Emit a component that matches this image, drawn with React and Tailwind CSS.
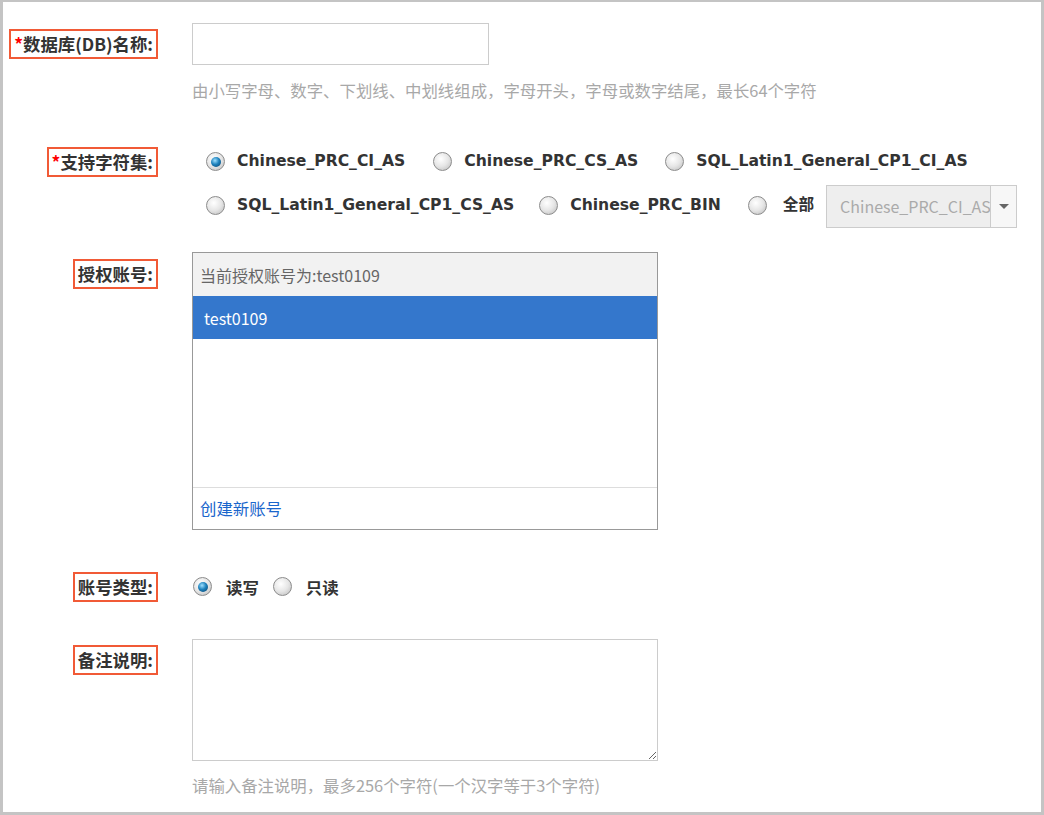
import { useState } from "react";

const cjk = "font-['Noto_Sans_CJK_SC',sans-serif]";
const opt = "font-['DejaVu_Sans','Noto_Sans_CJK_SC',sans-serif]";

function Label({ text, required }) {
  return (
    <div className="w-[155px] flex justify-end shrink-0">
      <div
        className={`border-2 border-[#f15a36] px-[3px] py-[2px] leading-[22px] text-[17.4px] font-bold text-[#333] whitespace-nowrap ${cjk}`}
      >
        {required && <span className="text-[#ff0000]">*</span>}
        {text}
      </div>
    </div>
  );
}

function Radio({ checked }) {
  return (
    <span className="w-[19px] h-[19px] rounded-full border border-[#8c8c8c] bg-[radial-gradient(circle_at_40%_35%,#ffffff,#e6e6e6_50%,#b8b8b8)] flex items-center justify-center shrink-0">
      {checked && (
        <span className="w-[10px] h-[10px] rounded-full bg-[radial-gradient(circle_at_40%_35%,#9fe0ff,#1e82bd_45%,#083d66)]" />
      )}
    </span>
  );
}

function Option({ label, checked, onClick, className = "", gap = "ml-[12px]" }) {
  return (
    <div className={`flex items-center cursor-pointer ${className}`} onClick={onClick}>
      <Radio checked={checked} />
      <span className={`${gap} text-[15.6px] font-bold text-[#333] ${opt}`}>{label}</span>
    </div>
  );
}

export default function App() {
  const [charset, setCharset] = useState("Chinese_PRC_CI_AS");
  const [mode, setMode] = useState("rw");

  return (
    <div className="w-[1044px] h-[815px] bg-white border-t-2 border-l-[3px] border-r-[3px] border-b-[3px] border-[#c4c4c4] pt-[21px]">
      {/* 数据库名称 */}
      <div className="flex items-center">
        <Label text="数据库(DB)名称:" required />
        <input className="ml-[34px] w-[297px] h-[42px] border border-[#cccccc] outline-none px-2" />
      </div>
      <div className={`ml-[189px] mt-[13px] text-[16.4px] leading-[24px] text-[#a8a8a8] ${cjk}`}>
        由小写字母、数字、下划线、中划线组成，字母开头，字母或数字结尾，最长64个字符
      </div>

      {/* 字符集 */}
      <div className="flex items-start mt-[38px]">
        <div className="h-[44px] flex items-center">
          <Label text="支持字符集:" required />
        </div>
        <div className="ml-[48px]">
          <div className="h-[44px] flex items-center">
            <Option label="Chinese_PRC_CI_AS" checked={charset === "Chinese_PRC_CI_AS"} onClick={() => setCharset("Chinese_PRC_CI_AS")} />
            <Option className="ml-[28px]" label="Chinese_PRC_CS_AS" checked={charset === "Chinese_PRC_CS_AS"} onClick={() => setCharset("Chinese_PRC_CS_AS")} />
            <Option className="ml-[27px]" label="SQL_Latin1_General_CP1_CI_AS" checked={charset === "SQL_Latin1_General_CP1_CI_AS"} onClick={() => setCharset("SQL_Latin1_General_CP1_CI_AS")} />
          </div>
          <div className="h-[44px] flex items-center">
            <Option label="SQL_Latin1_General_CP1_CS_AS" checked={charset === "SQL_Latin1_General_CP1_CS_AS"} onClick={() => setCharset("SQL_Latin1_General_CP1_CS_AS")} />
            <Option className="ml-[25px]" label="Chinese_PRC_BIN" checked={charset === "Chinese_PRC_BIN"} onClick={() => setCharset("Chinese_PRC_BIN")} />
            <Option className="ml-[27px]" gap="ml-[16px]" label="全部" checked={charset === "all"} onClick={() => setCharset("all")} />
            <div className="ml-[12px] w-[191px] h-[43px] border border-[#cccccc] bg-[#eeeeee] flex">
              <div className={`flex-1 overflow-hidden whitespace-nowrap pl-[13px] leading-[41px] text-[16px] text-[#aaaaaa] ${cjk}`}>
                Chinese_PRC_CI_AS
              </div>
              <div className="w-[26px] border-l border-[#cccccc] bg-[#f7f7f7] flex items-center justify-center">
                <span className="w-0 h-0 border-l-[5px] border-r-[5px] border-t-[5px] border-l-transparent border-r-transparent border-t-[#666]" />
              </div>
            </div>
          </div>
        </div>
      </div>

      {/* 授权账号 */}
      <div className="flex items-start mt-[24px]">
        <div className="mt-[7px]">
          <Label text="授权账号:" />
        </div>
        <div className={`ml-[34px] w-[466px] h-[278px] border border-[#999999] flex flex-col ${cjk}`}>
          <div className="h-[43px] bg-[#f2f2f2] flex items-center pl-[7px] text-[16px] text-[#666]">
            当前授权账号为:test0109
          </div>
          <div className="h-[43px] bg-[#3477cc] flex items-center pl-[11px] text-[16px] text-white">
            test0109
          </div>
          <div className="flex-1" />
          <div className="h-[42px] border-t border-[#dddddd] flex items-center pl-[7px] text-[16.4px] text-[#1a66cc]">
            创建新账号
          </div>
        </div>
      </div>

      {/* 账号类型 */}
      <div className="flex items-center mt-[42px]">
        <Label text="账号类型:" />
        <div className="ml-[35px] flex items-center">
          <div className="flex items-center cursor-pointer" onClick={() => setMode("rw")}>
            <Radio checked={mode === "rw"} />
            <span className={`ml-[14px] text-[16.4px] font-bold text-[#333] ${cjk}`}>读写</span>
          </div>
          <div className="flex items-center cursor-pointer ml-[14px]" onClick={() => setMode("r")}>
            <Radio checked={mode === "r"} />
            <span className={`ml-[14px] text-[16.4px] font-bold text-[#333] ${cjk}`}>只读</span>
          </div>
        </div>
      </div>

      {/* 备注说明 */}
      <div className="flex items-start mt-[37px]">
        <div className="mt-[6px]">
          <Label text="备注说明:" />
        </div>
        <textarea className="ml-[34px] w-[466px] h-[122px] border border-[#cccccc] outline-none p-2" />
      </div>
      <div className={`ml-[189px] mt-[12px] text-[16.4px] leading-[24px] text-[#a8a8a8] ${cjk}`}>
        请输入备注说明，最多256个字符(一个汉字等于3个字符)
      </div>
    </div>
  );
}
